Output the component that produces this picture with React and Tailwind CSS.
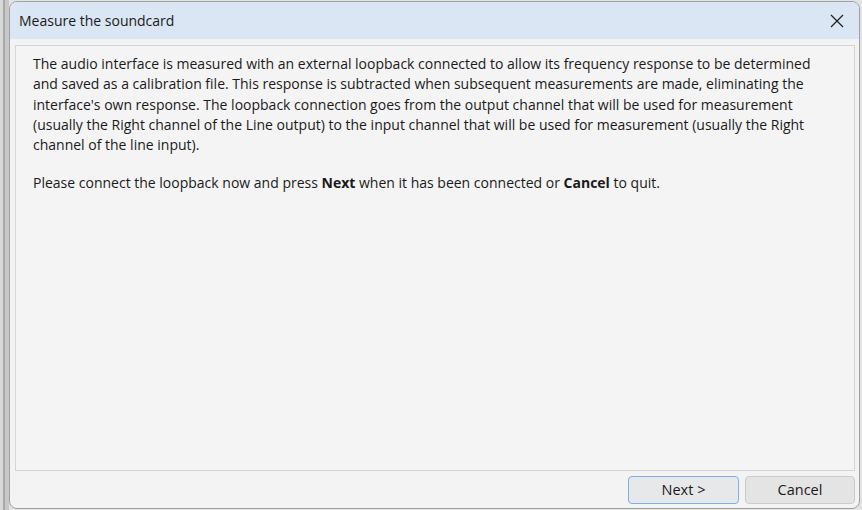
export default function App() {
  return (
    <div className="w-[862px] h-[510px] bg-[#e3e3e3] flex overflow-hidden relative" style={{ fontFamily: '"Open Sans", "Noto Sans", sans-serif' }}>
      <div className="w-[9px] shrink-0 flex">
        <div className="w-[3px] bg-[#d8d8d8]" />
        <div className="w-[2px] bg-[#a8a8a8]" />
        <div className="w-[4px] bg-[#c8c8c8]" />
      </div>
      <div className="mt-[1px] h-[508px] w-[851px] rounded-[8px] border border-[#a0a0a0] bg-[#f3f3f3] flex flex-col overflow-hidden">
        <div className="h-[37px] shrink-0 bg-[#dae6f3] flex items-center justify-between pl-[9px] pr-[15px]">
          <span className="text-[14px] text-[#1a1a1a]">Measure the soundcard</span>
          <svg width="14" height="14" viewBox="0 0 14 14" className="text-[#222]">
            <path d="M1 1 L13 13 M13 1 L1 13" stroke="currentColor" strokeWidth="1.3" />
          </svg>
        </div>
        <div className="flex-1 flex flex-col pl-[5px] pr-[4px] pt-[6px] pb-[4px]">
          <div className="flex-1 border border-[#d4d4d4] bg-[#f4f4f4] pl-[17px] pt-[8px] text-[14px] leading-[20.3px] text-[#1a1a1a] whitespace-nowrap">
            <p>
              The audio interface is measured with an external loopback connected to allow its frequency response to be determined<br />
              and saved as a calibration file. This response is subtracted when subsequent measurements are made, eliminating the<br />
              interface's own response. The loopback connection goes from the output channel that will be used for measurement<br />
              (usually the Right channel of the Line output) to the input channel that will be used for measurement (usually the Right<br />
              channel of the line input).
            </p>
            <p className="mt-[18px]">
              Please connect the loopback now and press <b>Next</b> when it has been connected or <b>Cancel</b> to quit.
            </p>
          </div>
          <div className="shrink-0 flex justify-end gap-[6px] pt-[5px]">
            <button className="w-[111px] h-[28px] rounded-[4px] border border-[#7eaee6] bg-[#e6e8ea] text-[14.5px] text-[#1a1a1a]">Next &gt;</button>
            <button className="w-[110px] h-[28px] rounded-[4px] border border-[#cccccc] bg-[#e4e4e4] text-[14.5px] text-[#1a1a1a]">Cancel</button>
          </div>
        </div>
      </div>
    </div>
  );
}
